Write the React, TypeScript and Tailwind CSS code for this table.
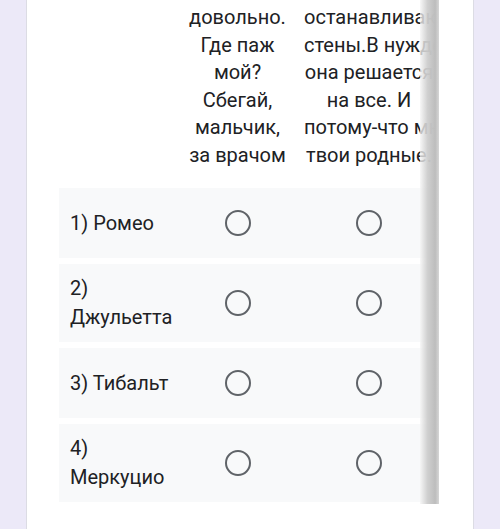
import React from 'react';

const colOne = ['довольно.', 'Где паж', 'мой?', 'Сбегай,', 'мальчик,', 'за врачом'];
const colTwo = ['останавливают', 'стены.В нужде', 'она решается', 'на все. И', 'потому-что мне', 'твои родные.'];

const rows = [
  { label: ['1) Ромео'], tall: false },
  { label: ['2)', 'Джульетта'], tall: true },
  { label: ['3) Тибальт'], tall: false },
  { label: ['4)', 'Меркуцио'], tall: true },
];

const Radio = () => (
  <span className="block h-[26px] w-[26px] rounded-full border-[2.5px] border-[#5f6368]" />
);

export default function App() {
  return (
    <div
      className="h-[529px] w-[500px] overflow-hidden bg-[#ece9f8] pl-[26px]"
      style={{ fontFamily: 'Roboto, "Noto Sans", sans-serif' }}
    >
      <div className="h-full w-[448px] border-x border-[#dcdce4] bg-white pl-[32px] pr-[34px]">
        <div className="relative w-[380px] overflow-hidden pb-[2px] text-[20px] text-[#202124]">
          <div className="w-[620px]">
            <div className="flex pt-[4px] leading-[27.5px]">
              <div className="w-[112px] shrink-0" />
              <div className="w-[133px] shrink-0 text-center">
                {colOne.map((line) => (
                  <div key={line}>{line}</div>
                ))}
              </div>
              <div className="w-[130px] shrink-0 text-center">
                {colTwo.map((line) => (
                  <div key={line} className="whitespace-nowrap">{line}</div>
                ))}
              </div>
            </div>

            <div className="mt-[19px] flex flex-col gap-[6px]">
              {rows.map((row) => (
                <div
                  key={row.label.join(' ')}
                  className={`flex items-center bg-[#f8f9fa] ${row.tall ? 'h-[78px]' : 'h-[70px]'}`}
                >
                  <div className="w-[112px] shrink-0 pl-[11px] leading-[29px]">
                    {row.label.map((l) => (
                      <div key={l} className="whitespace-nowrap">{l}</div>
                    ))}
                  </div>
                  <div className="flex w-[133px] shrink-0 justify-center">
                    <Radio />
                  </div>
                  <div className="flex w-[130px] shrink-0 justify-center">
                    <Radio />
                  </div>
                </div>
              ))}
            </div>
          </div>

          {/* horizontal scroll edge */}
          <div className="absolute right-0 top-0 bottom-0 w-[19px] bg-[linear-gradient(to_right,rgba(245,245,245,0.75)_0%,rgba(205,205,205,0.95)_40%,#bdbdbd_80%,#d6d6d6_100%)]" />
        </div>
      </div>
    </div>
  );
}
